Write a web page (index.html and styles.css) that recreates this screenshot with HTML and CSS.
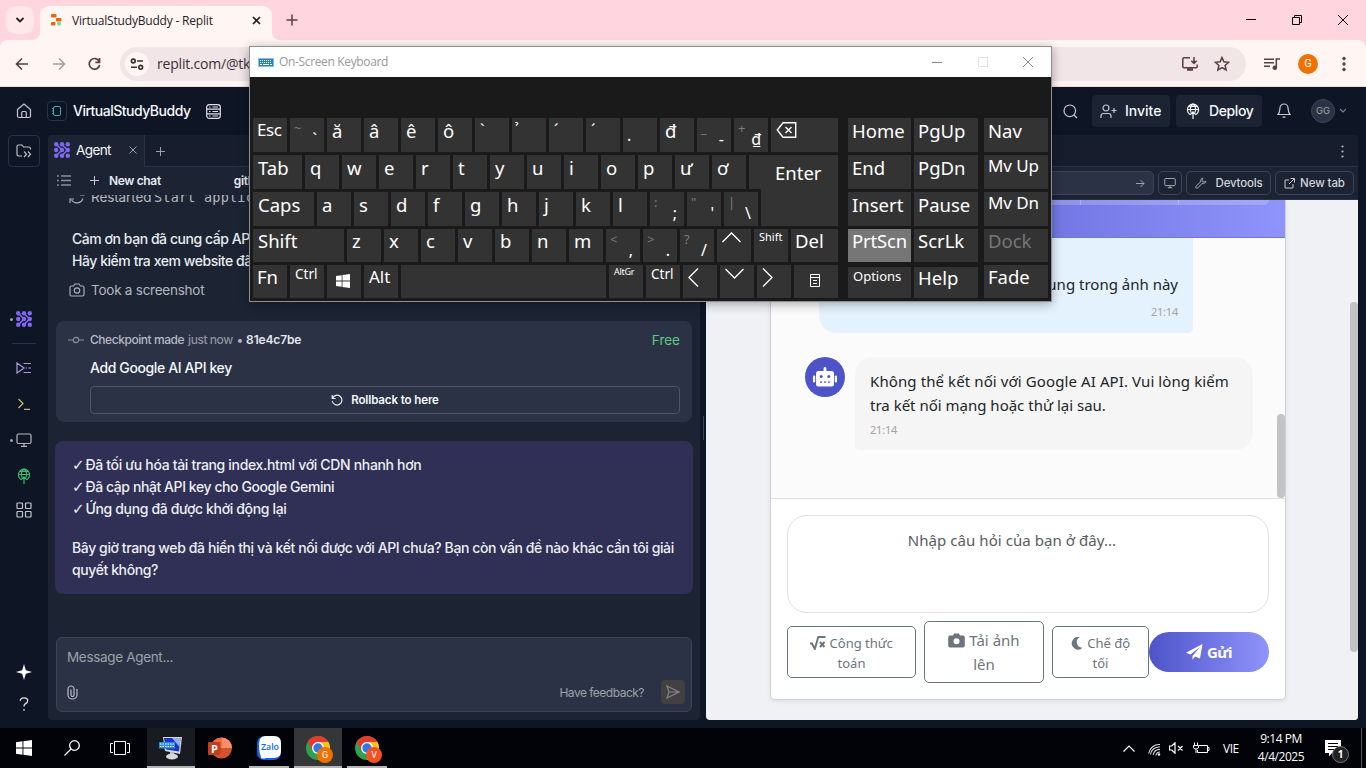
FILE: index.html
```html
<!DOCTYPE html>
<html lang="vi">
<head>
<meta charset="utf-8">
<title>VirtualStudyBuddy - Replit</title>
<link rel="stylesheet" href="styles.css">
</head>
<body>
<svg class="defs" width="0" height="0">
  <symbol id="agent" viewBox="0 0 16 16"><g fill="#8068f5"><circle cx="2.200" cy="2.200" r="2.200"/><circle cx="8" cy="2.200" r="2.200"/><circle cx="13.800" cy="2.200" r="2.200"/><circle cx="2.200" cy="8" r="2.200"/><circle cx="8" cy="8" r="2.200"/><circle cx="13.800" cy="8" r="2.200"/><circle cx="2.200" cy="13.800" r="2.200"/><circle cx="8" cy="13.800" r="2.200"/><circle cx="13.800" cy="13.800" r="2.200"/></g><path d="M2.500 2.500 8 8l-5.500 5.500M8 2.500 13.500 8 8 13.500" stroke="#8068f5" stroke-width="1.600" fill="none"/></symbol>
  <symbol id="deploy" viewBox="0 0 16 16"><g fill="none" stroke="currentColor" stroke-width="1.200"><path d="M5 11.500A5.600 5.600 0 1 1 11 11.500M2.500 6.500h11M3.500 3.500h9M8 1c-3.300 3-3 6-2 8.500M8 1c3.300 3 3 6 2 8.500M8 16V9M5 11.800 8 8.800l3 3"/></g></symbol>
  <symbol id="monitor" viewBox="0 0 16 16"><g fill="none" stroke="currentColor" stroke-width="1.200"><rect x="1" y="2" width="14" height="9.500" rx="1.500"/><path d="M8 11.500V14M5 14.300h6"/></g></symbol>
  <symbol id="winlogo" viewBox="0 0 16 16"><path fill="#fff" d="M0 2.200 6.500 1.300v6.200H0zM7.400 1.200 16 0v7.500H7.400zM0 8.500h6.500v6.200L0 13.800zM7.400 8.500H16V16l-8.600-1.200z"/></symbol>
  <symbol id="chrome" viewBox="0 0 24 24"><circle cx="12" cy="12" r="12" fill="#2ca24c"/><path d="M12 6h10.400A12 12 0 0 1 12 24l5.200-9z" fill="#fbc116"/><path d="M1.600 6A12 12 0 0 1 22.400 6H12L7 9v6z" fill="#e33b2e"/><circle cx="12" cy="12" r="6" fill="#fff"/><circle cx="12" cy="12" r="4.700" fill="#3478e5"/></symbol>
</svg>

<div class="desktop">
  <header class="tabstrip">
    <div class="tab-search"><svg width="10" height="10" viewBox="0 0 10 10"><path d="M1.500 3 5 6.500 8.500 3" fill="none" stroke="#222" stroke-width="1.800"/></svg></div>
    <div class="browser-tab">
      <svg width="11" height="12" viewBox="0 0 11 12"><g fill="#f26207"><rect x="0" y="0" width="5.500" height="3.500" rx="1"/><rect x="5" y="4" width="5.500" height="3.500" rx="1"/><rect x="0" y="8" width="4.500" height="3.500" rx="1"/></g><circle cx="8" cy="9.800" r="2" fill="#6fe08a"/></svg>
      <span class="browser-title">VirtualStudyBuddy - Replit</span>
      <svg width="9" height="9" viewBox="0 0 9 9"><path d="M1 1l7 7M8 1 1 8" stroke="#222" stroke-width="1.700"/></svg>
    </div>
    <svg class="newtab" width="12" height="12" viewBox="0 0 12 12"><path d="M6 .5v11M.5 6h11" stroke="#5b3c42" stroke-width="1.500"/></svg>
    <div class="winctl">
      <svg width="10" height="10"><path d="M0 4.500h10" stroke="#000"/></svg>
      <svg width="10" height="10"><path d="M.5 2.500h7v7h-7zM2.500 2V.5h7v7H8" fill="none" stroke="#000"/></svg>
      <svg width="10" height="10"><path d="M0 0l10 10M10 0 0 10" stroke="#000"/></svg>
    </div>
  </header>

  <div class="toolbar-wrap">
  <div class="toolbar">
    <svg width="14" height="14" viewBox="0 0 14 14"><path d="M13 7H2M7 1.500 1.500 7 7 12.500" fill="none" stroke="#5b3c42" stroke-width="1.600"/></svg>
    <svg width="14" height="14" viewBox="0 0 14 14"><path d="M1 7h11M7 1.500 12.500 7 7 12.500" fill="none" stroke="#ab9a9b" stroke-width="1.600"/></svg>
    <svg width="14" height="14" viewBox="0 0 14 14"><path d="M11.200 4.300A5.300 5.300 0 1 0 11.700 8M11.500 1v4.300H7.300" fill="none" stroke="#5b3c42" stroke-width="1.700"/></svg>
    <div class="address">
      <div class="site-info"><svg width="14" height="14" viewBox="0 0 14 14" fill="none" stroke="#3b2b2e" stroke-width="1.600"><circle cx="3.300" cy="4" r="1.900"/><path d="M7 4h6M1 10.300h6"/><circle cx="10.700" cy="10.300" r="1.900"/></svg></div>
      <span class="url">replit.com/@tkgiap2009/VirtualStudyBuddy</span>
      <svg width="18" height="16" viewBox="0 0 18 16" fill="none" stroke="#5b3c42" stroke-width="1.500"><path d="M9 1.800H3Q1.800 1.800 1.800 3v7.500q0 1.200 1.200 1.200h12q1.200 0 1.200-1.200V8.500M13 1v6M10.300 4.700 13 7.400l2.700-2.700"/><path d="M6 13.500h6" stroke-width="2.500"/></svg>
      <svg width="16" height="16" viewBox="0 0 16 16"><path d="M8 1.500l1.900 4.300 4.700.5-3.500 3.100 1 4.600L8 11.600 3.900 14l1-4.600L1.400 6.300l4.700-.5z" fill="none" stroke="#5b3c42" stroke-width="1.500"/></svg>
    </div>
    <svg width="16" height="14" viewBox="0 0 16 14"><path d="M0 2.200h10M0 5.700h10M0 9.200h6M12.300 11V2H16" fill="none" stroke="#5b3c42" stroke-width="1.500"/><circle cx="10.800" cy="10.800" r="2.300" fill="#5b3c42"/></svg>
    <span class="profile">G</span>
    <svg width="4" height="16" viewBox="0 0 4 16" fill="#5b3c42"><circle cx="2" cy="2.500" r="1.700"/><circle cx="2" cy="8" r="1.700"/><circle cx="2" cy="13.500" r="1.700"/></svg>
  </div>
  </div>

  <div class="app">
    <div class="app-header">
      <svg width="16" height="16" viewBox="0 0 16 16" fill="none" stroke="#c2c8cc" stroke-width="1.200"><path d="M1.500 6.500 8 1l6.500 5.500v6.500q0 1.500-1.500 1.500H3q-1.500 0-1.500-1.500zM5.700 14.500V9.500q0-1 1-1h2.600q1 0 1 1v5"/></svg>
      <div class="repl-logo"><svg width="12" height="12" viewBox="0 0 12 12" fill="none" stroke="#4ba3b8"><rect x="2.500" y="1.500" width="7" height="9" rx="1.500"/><path d="M1 3.500h2M1 6h2M1 8.500h2"/></svg></div>
      <span class="repl-name">VirtualStudyBuddy</span>
      <svg width="15" height="15" viewBox="0 0 15 15" fill="none" stroke="#dfe3e8" stroke-width="1.200"><rect x=".7" y=".7" width="13.600" height="13.600" rx="2.500"/><path d="M1 5.200h13M1 9.800h13M3 3h1.500M3 7.500h1.500M3 12h1.500M6.500 3H12M6.500 7.500H12M6.500 12H12"/></svg>
      <div class="header-right">
        <svg width="15" height="15" viewBox="0 0 15 15" fill="none" stroke="#c2c8cc" stroke-width="1.200"><circle cx="6.800" cy="6.800" r="5.800"/><path d="M11 11l3 3"/></svg>
        <div class="btn invite"><svg width="17" height="15" viewBox="0 0 17 15" fill="none" stroke="#c2c8cc" stroke-width="1.200"><circle cx="6" cy="4" r="3"/><path d="M1 14v-2q0-2.500 2.500-2.500h5Q11 9.500 11 12v2M14 4v5M11.500 6.500h5"/></svg><span>Invite</span></div>
        <div class="btn deploy"><svg width="16" height="16"><use href="#deploy"/></svg><span>Deploy</span></div>
        <svg class="bell" width="14" height="16" viewBox="0 0 14 16" fill="none" stroke="#c2c8cc" stroke-width="1.200"><path d="M1 11.500C3 9.500 2.500 7 3 5a4 4 0 0 1 8 0c.5 2 0 4.500 2 6.500zM5.500 14.200h3"/></svg>
        <span class="gg">GG</span>
        <svg width="8" height="6" viewBox="0 0 8 6"><path d="M1 1l3 3 3-3" fill="none" stroke="#7a8290" stroke-width="1.100"/></svg>
      </div>
    </div>

    <div class="app-body">
      <nav class="sidebar">
        <div class="files"><svg width="16" height="16" viewBox="0 0 16 16" fill="none" stroke="#b9bfc7" stroke-width="1.200"><path d="M6 13H3q-2 0-2-2V3.500Q1 2 2.500 2H6l1.500 2H12.500q2 0 2 2v.5M8 8.500l2.500 2.700L8 14M12 8.500l2.500 2.700L12 14"/></svg></div>
        <div class="side-item s-agent"><i></i><svg width="16" height="16"><use href="#agent"/></svg></div>
        <hr>
        <div class="side-item s-flow"><svg width="16" height="12" viewBox="0 0 16 12" fill="none" stroke="#a99ad6" stroke-width="1.200"><path d="M1 1v10l7-5zM7.500 1.500H15M9.500 6H11M12.500 6H15M7.500 10.500H15"/></svg></div>
        <div class="side-item s-shell"><svg width="14" height="14" viewBox="0 0 14 14" fill="none" stroke="#c8b768" stroke-width="1.300"><path d="M1.500 2l4.500 4.500L1.500 11M7 12.300h6"/></svg></div>
        <div class="side-item s-preview gray"><i></i><svg width="16" height="16"><use href="#monitor"/></svg></div>
        <div class="side-item s-deploy green"><svg width="16" height="16"><use href="#deploy"/></svg></div>
        <div class="side-item s-all"><svg width="16" height="16" viewBox="0 0 16 16" fill="none" stroke="#c2c8cc" stroke-width="1.200"><rect x="1" y="1" width="5.500" height="5.500" rx=".7"/><rect x="9.500" y="1" width="5.500" height="5.500" rx=".7"/><rect x="1" y="9.500" width="5.500" height="5.500" rx=".7"/><rect x="9.500" y="9.500" width="5.500" height="5.500" rx=".7"/></svg></div>
        <div class="side-bottom">
          <svg width="16" height="16" viewBox="0 0 16 16"><path d="M8 0l1.800 6.200L16 8 9.800 9.800 8 16 6.200 9.800 0 8l6.200-1.800z" fill="#fff"/></svg>
          <svg width="10" height="14" viewBox="0 0 10 14"><path d="M1.200 3.800Q1.500.8 5 .8t3.700 2.700Q8.800 5.500 6.500 6.600 5 7.400 5 9.500M5 12v1.800" fill="none" stroke="#dfe3e8" stroke-width="1.300"/></svg>
        </div>
      </nav>

      <section class="pane agent-pane">
        <div class="pane-tabs">
          <div class="pane-tab"><svg width="16" height="16"><use href="#agent"/></svg><span>Agent</span><svg class="x" width="8" height="8" viewBox="0 0 8 8"><path d="M.5.500l7 7M7.500.500l-7 7" stroke="#9da2a6"/></svg></div>
          <div class="pane-rest"><svg width="9" height="9" viewBox="0 0 9 9"><path d="M4.500 0v9M0 4.500h9" stroke="#9da2a6"/></svg></div>
        </div>
        <div class="chat-bar">
          <svg width="14" height="11" viewBox="0 0 14 11"><path d="M4 1h10M4 5.500h10M4 10h10M0 1h1.800M0 5.500h1.800M0 10h1.800" stroke="#8b919b" stroke-width="1.400"/></svg>
          <svg class="plus" width="9" height="9" viewBox="0 0 9 9"><path d="M4.500 0v9M0 4.500h9" stroke="#c2c8cc"/></svg>
          <b>New chat</b><b class="ghub">github API key</b>
        </div>
        <div class="thread">
          <div class="status restarted"><svg width="16" height="16" viewBox="0 0 16 16" fill="none" stroke="#a9afb7" stroke-width="1.200"><path d="M2 6a6.500 6.500 0 0 1 11.500-1M14 9.500a6.500 6.500 0 0 1-11.500 1.500M1 14v-4h4M15 2v4h-4"/></svg><span>Restarted <code>Start application</code></span></div>
          <p class="reply"><span class="r1">Cảm ơn bạn đã cung cấp API key.</span><br><span class="r2">Hãy kiểm tra xem website đã hoạt động</span></p>
          <div class="status shot"><svg width="16" height="14" viewBox="0 0 16 14" fill="none" stroke="#a9afb7" stroke-width="1.200"><path d="M1 4.500Q1 3 2.500 3H4.500L6 1h4l1.500 2h2Q15 3 15 4.500v7q0 1.500-1.500 1.500h-11Q1 13 1 11.500z"/><circle cx="8" cy="7.500" r="2.700"/></svg><span>Took a screenshot</span></div>
          <div class="checkpoint">
            <div class="cp-head"><svg width="16" height="8" viewBox="0 0 16 8" fill="none" stroke="#8b919b" stroke-width="1.200"><circle cx="8" cy="4" r="2.700"/><path d="M0 4h5M11 4h5"/></svg><span class="cp-made">Checkpoint made</span><span class="cp-now">just now</span><span class="cp-dot">•</span><span class="cp-hash">81e4c7be</span><span class="free">Free</span></div>
            <div class="cp-title">Add Google AI API key</div>
            <div class="rollback"><svg width="12" height="12" viewBox="0 0 12 12" fill="none" stroke="#e4e7eb" stroke-width="1.200"><path d="M1.500 4.200A4.900 4.900 0 1 1 1.200 7M1.200 1v3.500h3.500"/></svg><span>Rollback to here</span></div>
          </div>
          <div class="question">
            <p><i class="tick">✓</i><span class="q1">Đã tối ưu hóa tải trang index.html với CDN nhanh hơn</span><br><i class="tick">✓</i><span class="q2">Đã cập nhật API key cho Google Gemini</span><br><i class="tick">✓</i><span class="q3">Ứng dụng đã được khởi động lại</span></p>
            <p><span class="q4">Bây giờ trang web đã hiển thị và kết nối được với API chưa? Bạn còn vấn đề nào khác cần tôi giải</span><br><span class="q5">quyết không?</span></p>
          </div>
          <div class="composer">
            <div class="placeholder">Message Agent...</div>
            <div class="composer-row"><svg width="11" height="15" viewBox="0 0 11 15" fill="none" stroke="#b5bac1" stroke-width="1.200"><path d="M10 4v6a4.500 4 0 0 1-9 0V4a3 3 0 0 1 6 0v6a1.500 1.500 0 0 1-3 0V4.500"/></svg><span>Have feedback?</span><div class="send"><svg width="14" height="14" viewBox="0 0 14 14" fill="none" stroke="#858585" stroke-width="1.200"><path d="M1 1l12 6L1 13l2-6zM3 7h9"/></svg></div></div>
          </div>
        </div>
      </section>

      <div class="gutter"><i></i></div>

      <section class="pane web-pane">
        <div class="pane-tabs web-tabs"><svg width="3" height="13" viewBox="0 0 3 13" fill="#b5bac1"><circle cx="1.500" cy="1.500" r="1.100"/><circle cx="1.500" cy="6.500" r="1.100"/><circle cx="1.500" cy="11.500" r="1.100"/></svg></div>
        <div class="web-bar">
          <div class="web-url"><svg width="9" height="9" viewBox="0 0 9 9"><path d="M0 4.500h8M4.500 1 8 4.500 4.500 8" fill="none" stroke="#9da2a6"/></svg></div>
          <div class="web-btn gray"><svg width="12" height="12"><use href="#monitor"/></svg></div>
          <div class="web-btn dev"><svg width="12" height="12" viewBox="0 0 12 12" fill="none" stroke="#a9afb7"><path d="M8 1.200a2.800 2.800 0 0 0-2.500 3.600L1 9.300q-.7 1 .2 1.700.7.500 1.500-.1L7.200 6.500A2.800 2.800 0 0 0 10.900 4L9.200 5 7.300 4.700 7 2.800z"/></svg><span>Devtools</span></div>
          <div class="web-btn"><svg width="11" height="11" viewBox="0 0 11 11" fill="none" stroke="#c2c8cc"><path d="M5 2H1v8h8V6M6.500.500h4v4M10.500.500 5 6"/></svg><span>New tab</span></div>
        </div>
        <div class="webview">
          <div class="buddy">
            <div class="buddy-head"><div class="seg"></div></div>
            <div class="messages">
              <div class="user-msg"><p>Giải thích nội dung trong ảnh này</p><time>21:14</time></div>
              <div class="bot-row">
                <div class="bot-avatar"><svg width="24" height="20" viewBox="0 0 24 20" fill="#fff"><rect x="3" y="4" width="18" height="15.500" rx="2.500"/><rect x="10.600" y="0" width="2.800" height="5" rx="1.400"/><rect x="0" y="8.500" width="2.200" height="7" rx="1"/><rect x="21.800" y="8.500" width="2.200" height="7" rx="1"/><g fill="#4e54c8"><circle cx="8.200" cy="9.500" r="1.500"/><circle cx="15.800" cy="9.500" r="1.500"/><path d="M7 14.500h2.200v1.200H7zM11 14.500h2.200v1.200H11zM15 14.500h2.200v1.200H15z"/></g></svg></div>
                <div class="bot-msg"><p><span class="b1">Không thể kết nối với Google AI API. Vui lòng kiểm</span><br><span class="b2">tra kết nối mạng hoặc thử lại sau.</span></p><time>21:14</time></div>
              </div>
              <div class="inner-scroll"></div>
            </div>
            <div class="buddy-foot">
              <div class="ask">Nhập câu hỏi của bạn ở đây...</div>
              <div class="actions">
                <div class="act a1"><svg width="16" height="14" viewBox="0 0 16 14" fill="none" stroke="#6c757d" stroke-width="1.900"><path d="M0 7.500h2L4.800 13 8.300 1H15.500M10 6l4.500 5M14.500 6 10 11"/></svg> Công thức<br>toán</div>
                <div class="act a2"><svg width="17" height="15" viewBox="0 0 17 15"><path d="M2 2.500h3L6 .5h5l1 2h3q1.800 0 1.800 1.800v8.500q0 1.700-1.800 1.700H2Q.2 14.500.2 12.800V4.300Q.2 2.500 2 2.500z" fill="#6c757d"/><circle cx="8.500" cy="8.300" r="3" fill="#fff"/></svg> Tải ảnh<br>lên</div>
                <div class="act a3"><svg width="13" height="13" viewBox="0 0 13 13"><path d="M9 .3a6.300 6.300 0 1 0 2.700 10.300A5.400 5.400 0 0 1 9 .3z" fill="#6c757d"/></svg> Chế độ<br>tối</div>
                <div class="gui"><svg width="17" height="16" viewBox="0 0 17 16"><path d="M16.500 0 14 14.500l-5-2-2.500 3.300V12L14 3 4.500 10.500 0 8.800z" fill="#fff"/></svg><span>Gửi</span></div>
              </div>
            </div>
          </div>
          <div class="page-scroll"><i></i></div>
        </div>
      </section>
    </div>
  </div>

  <footer class="taskbar">
    <div class="task"><svg width="16" height="16"><use href="#winlogo"/></svg></div>
    <div class="task"><svg width="16" height="16" viewBox="0 0 16 16" fill="none" stroke="#fff" stroke-width="1.300"><circle cx="10.500" cy="5.500" r="4.800"/><path d="M7 9 .5 15.500"/></svg></div>
    <div class="task"><svg width="20" height="14" viewBox="0 0 20 14" fill="none" stroke="#fff"><path d="M4.500.500h11v13h-11zM3 2.500H.5v9H3M17 2.500h2.500v9H17"/></svg></div>
    <div class="task on dim"><svg width="24" height="24" viewBox="0 0 24 24"><path d="M4 1h19l-2 17-15-3z" fill="#d9d9d2"/><path d="M5 2h16.500L20 15.500 7 13.500z" fill="#1a35cc"/><path d="M13 2h8.500l-1 9z" fill="#8fb2ef"/><path d="M11 16h4v4h-4z" fill="#bbb"/><ellipse cx="13" cy="20.500" rx="6" ry="3" fill="#d8d8d8"/><rect x="0" y="6" width="16" height="6.500" fill="#268be0"/><path d="M1 8h14M1 10.500h14" stroke="#fff" stroke-dasharray="1.500 1"/></svg></div>
    <div class="task"><svg width="24" height="22" viewBox="0 0 24 22"><circle cx="13.500" cy="11" r="10.500" fill="#d35230"/><path d="M13.500.5A10.500 10.500 0 0 1 24 11H13.500z" fill="#ff8f6b"/><path d="M13.500.5A10.500 10.500 0 0 0 3 11h10.500z" fill="#ed6c47"/><rect x="0" y="5" width="12.500" height="13" rx="1" fill="#c43e1c"/><text x="3" y="15.500" font-family="Open Sans, sans-serif" font-weight="700" font-size="11" fill="#fff">P</text></svg></div>
    <div class="task on narrow"><svg width="24" height="24" viewBox="0 0 24 24"><rect width="24" height="24" rx="7" fill="#0a63e9"/><path d="M3 3Q5 0 9 0h8q7 0 7 7v8q0 7-7 7H9q-3 1-5 0 0-2-1-4Q1 9 3 3z" fill="#fff"/><text x="4" y="14" font-family="Open Sans, sans-serif" font-weight="600" font-size="8.500" textLength="18" lengthAdjust="spacingAndGlyphs" fill="#0a68ff">Zalo</text></svg></div>
    <div class="task on light chrome"><svg width="24" height="24"><use href="#chrome"/></svg><b>G</b></div>
    <div class="task on narrow chrome red"><svg width="24" height="24"><use href="#chrome"/></svg><b>V</b></div>
    <div class="tray">
      <svg width="12" height="7" viewBox="0 0 12 7"><path d="M.5 6.500 6 1l5.500 5.500" fill="none" stroke="#fff" stroke-width="1.200"/></svg>
      <svg class="wifi" width="13" height="13" viewBox="0 0 13 13" fill="none" stroke="#ddd" stroke-width="1.100"><path d="M.7 10.500A10.500 10.500 0 0 1 12 1.500M2.500 11.500A8.500 8.500 0 0 1 12 4M5.200 12A6 6 0 0 1 12 6.500M8 12.500A4 4 0 0 1 12 9"/><circle cx="11" cy="11.500" r="1.200" fill="#fff" stroke="none"/></svg>
      <svg class="vol" width="15" height="12" viewBox="0 0 15 12" fill="none" stroke="#fff" stroke-width="1.200"><path d="M.5 4h2.300L6 .8v10.400L2.800 8H.5zM9 4l4.500 4.500M13.500 4 9 8.500"/></svg>
      <svg class="bat" width="17" height="12" viewBox="0 0 17 12" fill="none" stroke="#fff"><path d="M6 3.500h8.500v7h-10V8M14.500 5.500H16v3h-1.500M.5 3.500h5V5q0 2-2.500 2T.5 5zM1.500 3.500v-3M4.500 3.500v-3M3 7v4"/></svg>
      <span class="lang">VIE</span>
      <div class="clock"><span>9:14 PM</span><span>4/4/2025</span></div>
      <div class="notif"><svg width="16" height="17" viewBox="0 0 16 17"><path d="M0 0h16v13H7l-3 3.500V13H0z" fill="#fff"/><path d="M3 3.500h10M3 6.500h10M3 9.500h7" stroke="#000"/></svg><b>1</b></div>
      <i class="peek"></i>
    </div>
  </footer>

  <div class="osk">
    <div class="osk-title"><svg width="16" height="9" viewBox="0 0 16 9"><rect x=".5" y=".5" width="15" height="8" fill="#1f7ed6" stroke="#9ab9d8"/><path d="M2 2.500h12M2 4.500h12" stroke="#fff" stroke-dasharray="1 1"/><path d="M2 6.500h2M5 6.500h6M12 6.500h2" stroke="#fff"/></svg><span>On-Screen Keyboard</span>
      <div class="osk-ctl"><svg width="10" height="10"><path d="M0 5.500h10" stroke="#888"/></svg><svg width="10" height="10"><rect x=".5" y=".5" width="9" height="9" fill="none" stroke="#e2e2e2"/></svg><svg width="10" height="10"><path d="M0 0l10 10M10 0 0 10" stroke="#888"/></svg></div>
    </div>
    <div class="osk-body">
      <div class="rows">
        <div class="row"><div class="key md">Esc</div><div class="key dual"><i>~</i><em>ˋ</em></div><div class="key">ă</div><div class="key">â</div><div class="key">ê</div><div class="key">ô</div><div class="key acc">ˋ</div><div class="key acc hook">&nbsp;&#x309;</div><div class="key acc">ˊ</div><div class="key acc">ˊ</div><div class="key low">.</div><div class="key">đ</div><div class="key dual"><i>_</i><em>-</em></div><div class="key dual"><i>+</i><em>₫</em></div><div class="key grow"><svg width="21" height="16" viewBox="0 0 20 16" fill="none" stroke="#fff" stroke-width="1.400"><path d="M6.500.800h12.700v14.400H6.500L.8 8zM9 5l6 6M15 5l-6 6"/></svg></div></div>
        <div class="row"><div class="key tab">Tab</div><div class="key">q</div><div class="key">w</div><div class="key">e</div><div class="key">r</div><div class="key">t</div><div class="key">y</div><div class="key">u</div><div class="key">i</div><div class="key">o</div><div class="key">p</div><div class="key">ư</div><div class="key">ơ</div><div class="enter">Enter</div></div>
        <div class="row"><div class="key caps">Caps</div><div class="key">a</div><div class="key">s</div><div class="key">d</div><div class="key">f</div><div class="key">g</div><div class="key">h</div><div class="key">j</div><div class="key">k</div><div class="key">l</div><div class="key dual"><i>:</i><em>;</em></div><div class="key dual"><i>"</i><em>'</em></div><div class="key dual"><i>|</i><em>\</em></div></div>
        <div class="row short"><div class="key shift">Shift</div><div class="key">z</div><div class="key">x</div><div class="key">c</div><div class="key">v</div><div class="key">b</div><div class="key">n</div><div class="key">m</div><div class="key dual"><i>&lt;</i><em>,</em></div><div class="key dual"><i>&gt;</i><em>.</em></div><div class="key dual"><i>?</i><em>/</em></div><div class="key arrow"><svg width="19" height="11" viewBox="0 0 19 11"><path d="M.5 10 9.500 1l9 9"/></svg></div><div class="key xs">Shift</div><div class="key grow">Del</div></div>
        <div class="row short"><div class="key fn">Fn</div><div class="key sm">Ctrl</div><div class="key win"><svg width="14" height="14"><use href="#winlogo"/></svg></div><div class="key md alt">Alt</div><div class="key space"></div><div class="key xxs">AltGr</div><div class="key sm">Ctrl</div><div class="key arrow side"><svg width="11" height="19" viewBox="0 0 11 19"><path d="M10 .5 1 9.500l9 9"/></svg></div><div class="key arrow"><svg width="19" height="11" viewBox="0 0 19 11"><path d="M.5 1l9 9 9-9"/></svg></div><div class="key arrow side"><svg width="11" height="19" viewBox="0 0 11 19"><path d="M1 .5l9 9-9 9"/></svg></div><div class="key grow menu"><svg width="10" height="13" viewBox="0 0 10 13"><path d="M.5.500h9v12h-9zM.5 3.500h9M3 6.500h4M3 9.500h4" fill="none" stroke="#fff"/></svg></div></div>
      </div>
      <div class="pad">
        <div class="row"><div class="key">Home</div><div class="key b">PgUp</div><div class="key c">Nav</div></div>
        <div class="row"><div class="key">End</div><div class="key b">PgDn</div><div class="key c mv">Mv Up</div></div>
        <div class="row"><div class="key">Insert</div><div class="key b">Pause</div><div class="key c mv">Mv Dn</div></div>
        <div class="row short"><div class="key hot">PrtScn</div><div class="key b">ScrLk</div><div class="key c off">Dock</div></div>
        <div class="row short"><div class="key cut opt">Options</div><div class="key b cut">Help</div><div class="key c">Fade</div></div>
      </div>
    </div>
  </div>
</div>
</body>
</html>
```

FILE: styles.css
```css
* { box-sizing: border-box; }
body { margin: 0; overflow: hidden; }
p { margin: 0; }
svg { display: block; flex: none; }
.defs { position: absolute; }
.desktop { position: relative; width: 1366px; height: 768px; display: flex; flex-direction: column; overflow: hidden; font-family: "Open Sans", "Noto Sans", sans-serif; white-space: nowrap; }

/* Browser chrome */
.tabstrip { height: 40px; flex: none; display: flex; align-items: flex-start; background: #ffd6df; padding: 6px 18px 0 6px; }
.tab-search { width: 28px; height: 28px; border-radius: 9px; background: #ffe7ea; display: flex; align-items: center; justify-content: center; }
.browser-tab { width: 232px; height: 34px; margin-left: 6px; border-radius: 9px 9px 0 0; background: #fff6f4; display: flex; align-items: center; padding: 0 11px 6px 11px; position: relative; }
.browser-tab::before, .browser-tab::after { content: ""; position: absolute; bottom: 0; width: 8px; height: 8px; }
.browser-tab::before { left: -8px; background: radial-gradient(circle at 0 0, #ffd6df 7.500px, #fff6f4 8.500px); }
.browser-tab::after { right: -8px; background: radial-gradient(circle at 100% 0, #ffd6df 7.500px, #fff6f4 8.500px); }
.browser-title { flex: 1; margin-left: 10px; font-size: 12px; letter-spacing: -.19px; color: #241c1e; }
.newtab { margin: 8px 0 0 14px; }
.winctl { margin-left: auto; display: flex; gap: 36px; padding-top: 9px; }
.toolbar-wrap { height: 47px; flex: none; background: #ffd6df; }
.toolbar { height: 47px; display: flex; align-items: center; background: #fff6f4; border-radius: 8px 8px 0 0; padding: 0 20px 0 15px; box-shadow: inset 0 -1px #f6dcdf; }
.toolbar > svg:nth-child(2) { margin-left: 23px; }
.toolbar > svg:nth-child(3) { margin-left: 22px; }
.address { width: 1126px; height: 34px; margin-left: 18px; border-radius: 17px; background: #f2e5e8; display: flex; align-items: center; padding: 0 16px 0 5px; }
.site-info { width: 24px; height: 24px; border-radius: 50%; background: #fff6f4; display: flex; align-items: center; justify-content: center; }
.url { flex: 1; margin-left: 8px; font-size: 14px; letter-spacing: -.2px; color: #3c2f33; }
.address svg + svg { margin-left: 15px; }
.address + svg { margin-left: 18px; }
.profile { width: 20px; height: 20px; margin: 0 24px 0 18px; border-radius: 50%; background: #f07000; color: #fff; font: 11px/20px Roboto, sans-serif; text-align: center; }

/* Workspace */
.app { height: 641px; flex: none; display: flex; flex-direction: column; background: #0e1525; color: #f5f9fc; font-family: Inter, "Noto Sans", sans-serif; }
.app-header { height: 48px; flex: none; display: flex; align-items: center; padding: 0 19px 0 16px; }
.repl-logo { width: 20px; height: 20px; margin: 0 6px 0 15px; border: 1px solid #2b3245; border-radius: 4px; background: #071620; display: flex; align-items: center; justify-content: center; }
.repl-name { width: 133px; font-size: 14px; font-weight: 500; letter-spacing: -.5px; }
.header-right { margin-left: auto; display: flex; align-items: center; }
.btn { height: 32px; display: flex; align-items: center; border-radius: 4px; background: #1c2333; font-size: 14px; font-weight: 500; }
.btn span, .repl-name { padding-bottom: 1px; }
.invite { width: 78px; margin-left: 14px; padding-left: 8px; gap: 8px; }
.deploy { width: 86px; margin-left: 6px; padding-left: 9px; gap: 8px; }
.deploy span { letter-spacing: -.4px; }
.bell { margin-left: 15px; }
.gg { width: 24px; height: 24px; margin: 0 4px 0 20px; border: 1px solid #3c445c; border-radius: 50%; background: #2b3245; color: #9da2a6; font-size: 9.500px; line-height: 22px; text-align: center; }
.app-body { height: 585px; display: flex; padding-right: 8px; }
.sidebar { width: 48px; flex: none; display: flex; flex-direction: column; align-items: center; }
.files { width: 32px; height: 32px; border: 1px solid #2b3245; border-radius: 4px; display: flex; align-items: center; justify-content: center; }
.side-item { height: 16px; display: flex; align-items: center; justify-content: center; position: relative; }
.side-item i { position: absolute; left: -6px; width: 3px; height: 3px; border-radius: 50%; background: #9da2a6; }
.s-agent { margin-top: 144px; }
.sidebar hr { width: 24px; height: 1px; border: 0; background: #2b3245; margin: 16px 0; }
.s-shell, .s-preview, .s-deploy { margin-top: 20px; }
.s-all { margin-top: 18px; }
.gray { color: #b0b6be; }
.green { color: #43b86c; }
.side-bottom { margin-top: auto; display: flex; flex-direction: column; align-items: center; gap: 17px; padding-bottom: 9px; }
.pane { width: 652px; height: 585px; flex: none; border-radius: 4px; background: #1c2333; overflow: hidden; }
.pane-tabs { height: 32px; display: flex; background: #171d2d; }
.pane-tab { width: 97px; display: flex; align-items: center; padding: 0 7px 2px 6px; background: #1c2333; border-right: 1px solid #2b3245; font-size: 13.500px; letter-spacing: -.6px; }
.pane-tab span { margin-left: 6px; padding-bottom: 1px; }
.pane-tab .x { margin-left: auto; }
.pane-rest { flex: 1; border-bottom: 1px solid #2b3245; padding: 12px 11px; }
.chat-bar { height: 28px; display: flex; align-items: center; padding: 0 0 1px 9px; font-size: 12px; color: #e6eaee; }
.chat-bar b { font-weight: 600; letter-spacing: -.35px; }
.plus { margin: 0 10px 0 19px; }
.ghub { margin-left: 73px; }
.thread { height: 525px; padding: 0 8px 8px; overflow: hidden; display: flex; flex-direction: column; }
.status { display: flex; align-items: center; gap: 6px; padding-left: 13px; height: 20px; flex: none; color: #b4b9bf; font-size: 13.500px; letter-spacing: -.1px; }
.restarted { margin-top: -8px; }
.restarted code { font-family: "DejaVu Sans Mono", monospace; font-size: 13.500px; letter-spacing: .2px; margin-left: -1px; }
.reply { padding-left: 16px; margin-top: 21px; font-size: 14px; line-height: 22px; letter-spacing: -.45px; color: #e8ecf0; font-weight: 500; }
.shot { margin-top: 8px; letter-spacing: -.24px; }
.checkpoint { height: 101px; flex: none; margin-top: 21px; border-radius: 8px; background: #2b3245; padding: 10px 12px 0; }
.cp-head { display: flex; align-items: center; height: 17px; font-size: 12px; color: #b5bac1; font-weight: 500; }
.cp-made { margin-left: 6px; letter-spacing: -.45px; }
.cp-now { margin-left: 4px; color: #8e949d; letter-spacing: -.45px; }
.cp-dot { margin: 0 3px 0 4px; }
.cp-hash { color: #e4e7eb; font-weight: 600; letter-spacing: -.15px; }
.free { margin-left: auto; font-size: 13.500px; color: #5fc982; font-weight: 400; }
.cp-title { margin: 9px 0 0 22px; font-size: 14px; line-height: 22px; font-weight: 500; letter-spacing: -.38px; }
.rollback { height: 28px; margin: 7px 0 0 22px; border: 1px solid #4e5569; border-radius: 4px; display: flex; align-items: center; justify-content: center; gap: 8px; font-size: 11.500px; font-weight: 600; letter-spacing: -.1px; }
.question { height: 153px; flex: none; margin: 19px -1px 0; border-radius: 8px; background: #302f55; padding: 13px 17px; font-size: 14px; font-weight: 500; line-height: 22px; letter-spacing: -.4px; color: #eceef3; }
.tick { display: inline-block; width: 13.500px; font-family: "DejaVu Sans", sans-serif; font-style: normal; font-size: 15px; line-height: 18px; }
.q1 { letter-spacing: -.33px; }
.q2 { letter-spacing: -.42px; }
.q3 { letter-spacing: -.35px; }
.question p + p { margin-top: 17px; }
.composer { height: 75px; flex: none; margin-top: auto; border: 1px solid #3c445c; border-radius: 6px; background: #2b3245; padding: 8px 6px 0 10px; color: #9da2a6; }
.placeholder { font-size: 13.500px; line-height: 22px; letter-spacing: -.33px; }
.composer-row { display: flex; align-items: center; margin-top: 12px; }
.composer-row > span { margin-left: auto; font-size: 12px; letter-spacing: -.5px; }
.send { width: 24px; height: 24px; margin-left: 17px; border-radius: 4px; background: #414141; display: flex; align-items: center; justify-content: center; }
.gutter { width: 6px; flex: none; display: flex; align-items: center; justify-content: center; }
.gutter i { width: 1px; height: 24px; background: #3c445c; }
.web-tabs { height: 32px; border-bottom: 1px solid #2b3245; justify-content: flex-end; padding: 10px 14px; }
.web-bar { height: 33px; display: flex; align-items: center; justify-content: flex-end; gap: 4px; padding: 0 4px; border-bottom: 1px solid #2b3245; font-size: 11.500px; font-weight: 500; color: #d0d4d9; }
.web-url, .web-btn { height: 24px; border: 1px solid #3c445c; border-radius: 5px; display: flex; align-items: center; justify-content: center; }
.web-url { flex: 1; justify-content: flex-end; padding-right: 8px; background: #2b3245; }
.web-btn { width: 24px; }
.dev { width: 85px; gap: 9px; letter-spacing: -.2px; }
.web-btn:last-child { width: 79px; gap: 5px; letter-spacing: -.1px; }

/* Previewed page */
.webview { height: 520px; display: flex; background: #eff1f5; color: #212529; font-family: "Noto Sans", "Open Sans", sans-serif; }
.buddy { width: 516px; height: 500px; margin-left: 64px; border: 1px solid #ced2d6; border-top: 0; border-radius: 0 0 5px 5px; background: #fff; overflow: hidden; box-shadow: 0 2px 4px #0001; }
.buddy-head { height: 38px; background: linear-gradient(90deg, #4e54c8, #8f94fb); border-bottom: 1px solid #7377ce; }
.seg { height: 5px; margin: 0 16px; border-radius: 0 0 14px 0; background: repeating-linear-gradient(90deg, #fff3 0 97px, #fff6 97px 98px); }
.messages { height: 261px; position: relative; background: #fbfbfb; border-bottom: 1px solid #dfe0e2; }
.user-msg { width: 374px; height: 95px; margin-left: 48px; padding: 34px 15px 0; border-radius: 0 0 5px 18px; background: #e3f2fd; text-align: right; }
.user-msg p { font-size: 15px; line-height: 24px; }
time { display: block; font-size: 11px; line-height: 18px; color: #a3a3a3; letter-spacing: -.2px; }
.user-msg time { margin-top: 7px; }
.bot-row { display: flex; padding: 24px 0 0 34px; gap: 10px; }
.bot-avatar { width: 40px; height: 40px; border-radius: 50%; background: #4e54c8; display: flex; align-items: center; justify-content: center; }
.bot-msg { width: 398px; height: 93px; border-radius: 18px 18px 18px 5px; background: #f5f5f5; padding: 12px 15px; font-size: 15px; line-height: 24px; }
.b1 { letter-spacing: .1px; }
.bot-msg time { margin-top: 4px; }
.inner-scroll { position: absolute; right: 0; bottom: 0; width: 8px; height: 84px; background: #c3c3c3; border-radius: 4px; }
.buddy-foot { padding: 16px; }
.ask { height: 98px; border: 1px solid #dee0e2; border-radius: 20px; text-align: center; padding: 12px 32px 0 0; font-size: 15px; line-height: 24px; letter-spacing: .06px; color: #595c5f; }
.actions { display: flex; align-items: center; margin-top: 8px; }
.act { border: 1px solid #6c757d; border-radius: 5px; text-align: center; color: #6c757d; font-size: 13px; line-height: 20px; padding-top: 6px; height: 52px; }
.act svg { display: inline-block; vertical-align: -2px; }
.a1 { width: 129px; margin-right: 8px; }
.a2 { width: 120px; height: 62px; margin-right: 8px; font-size: 15px; line-height: 24px; }
.a3 { width: 97px; }
.gui { width: 120px; height: 40px; border-radius: 20px; background: linear-gradient(90deg, #4e54c8, #8f94fb); color: #fff; font-size: 15px; font-weight: 700; letter-spacing: -.5px; display: flex; align-items: center; justify-content: center; gap: 4px; }
.page-scroll { width: 8px; margin-left: auto; background: #f1f1f1; padding-top: 102px; }
.page-scroll i { display: block; height: 350px; border-radius: 4px; background: #c3c3c3; }

/* Taskbar */
.taskbar { height: 40px; flex: none; display: flex; background: #010308; color: #fff; }
.task { width: 49px; position: relative; display: flex; align-items: center; justify-content: center; border-bottom: 2px solid transparent; padding-top: 2px; }
.task:nth-child(-n+3) { width: 48px; }
.task:nth-child(3) { width: 51px; padding-right: 3px; }
.task.dim { width: 48px; background: #181c20; border-color: #b5b5b5; }
.task.light { width: 48px; background: #353638; border-color: #b5b5b5; }
.task:nth-child(5) { width: 50px; }
.narrow { width: 40px; border-color: #b5b5b5; margin: 0 5px 0 4px; }
.red { margin-left: 5px; }
.chrome b { position: absolute; right: 9px; bottom: 3px; width: 16px; height: 16px; border-radius: 50%; background: #f07000; font: 9px/16px Roboto, sans-serif; text-align: center; }
.red b { right: 5px; background: #f4511e; }
.tray { margin-left: auto; display: flex; align-items: center; font-size: 12px; }
.wifi { margin: 2px 0 0 13px; }
.vol { margin-left: 8px; }
.bat { margin-left: 9px; }
.lang { width: 17px; margin-left: 13px; letter-spacing: -.5px; }
.clock { width: 50px; margin: 0 19px 0 16px; display: flex; flex-direction: column; align-items: center; line-height: 18px; letter-spacing: -.45px; }
.notif { width: 24px; position: relative; }
.notif b { position: absolute; left: 7px; top: 6px; width: 17px; height: 17px; border: 1px solid #777; border-radius: 50%; background: #222; font-size: 10px; line-height: 15px; text-align: center; }
.peek { width: 1px; height: 40px; margin: 0 4px 0 12px; background: #555; }

/* Floating keyboard window */
.osk { position: absolute; left: 249px; top: 46px; width: 803px; height: 256px; border: 1px solid #8f8f92; background: #1a1a1a; color: #fff; box-shadow: 0 2px 10px #0005; font-family: "Noto Sans", "Open Sans", sans-serif; }
.osk-title { height: 30px; display: flex; align-items: center; background: #fff; color: #999; font: 12px "Open Sans", "Noto Sans", sans-serif; padding: 0 18px 0 8px; }
.osk-title span { margin: -1px 0 0 5px; letter-spacing: -.35px; }
.osk-ctl { margin: -1px 0 0 auto; display: flex; gap: 35.500px; }
.osk-body { display: flex; gap: 10px; padding: 41px 3px 0; }
.rows { width: 585px; display: flex; flex-direction: column; gap: 3px; }
.pad { width: 200px; display: flex; flex-direction: column; gap: 3px; }
.row { height: 34px; display: flex; gap: 3px; }
.row.short { height: 33px; }
.key { width: 34px; flex: none; background: #333; padding-left: 5px; font-size: 18.500px; line-height: 25px; overflow: hidden; }
.short .key { line-height: 23px; }
.key.grow { flex: 1; padding-top: 4px; }
.rows .short .key.grow { padding-top: 0; padding-left: 4px; }
.row .key.md { font-size: 17px; line-height: 23px; padding-left: 4px; letter-spacing: -.4px; }
.row .key.alt { padding-left: 5px; letter-spacing: 0; }
.row .key.fn { padding-left: 4px; }
.row .key.sm { font-size: 13.500px; line-height: 19px; }
.row .key.xs { font-size: 11px; line-height: 16px; letter-spacing: 0; }
.row .key.xxs { font-size: 9px; line-height: 14px; letter-spacing: -.3px; }
.tab { width: 49px; }
.caps { width: 61px; }
.shift { width: 91px; }
.space { width: 205px; }
.low { line-height: 34px; padding-left: 4px; font-size: 16px; }
.acc { font-size: 16px; line-height: 24px; }
.dual { display: flex; padding: 0 7px 0 4px; justify-content: space-between; font-size: 16px; }
.dual i { font-style: normal; color: #7c7c7c; font-size: 13px; line-height: 20px; }
.dual em { font-style: normal; line-height: 42px; }
.enter { width: 89px; height: 71px; flex: none; background: #333; clip-path: polygon(0 0, 100% 0, 100% 100%, 12px 100%, 12px 34px, 0 34px); padding: 5px 0 0 26px; font-size: 18.500px; line-height: 25px; }
.arrow { padding: 3px 0 0 5px; }
.arrow path { fill: none; stroke: #fff; stroke-width: 1.300; }
.win { padding: 9px 0 0 9px; }
.rows .short .key.menu { padding: 9px 0 0 16px; }
.pad .key { width: 63px; padding-left: 4px; }
.pad .key.b { width: 64px; }
.pad .key.c { width: 64px; margin-left: 3px; }
.pad .mv { font-size: 17px; line-height: 22px; letter-spacing: -.1px; }
.pad .hot { background: #767676; letter-spacing: -.15px; }
.off { color: #777; }
.pad .cut { height: 31px; margin-top: 2px; line-height: 22px; }
.pad .key.opt { font-size: 13px; line-height: 18px; padding-left: 5px; }
```
